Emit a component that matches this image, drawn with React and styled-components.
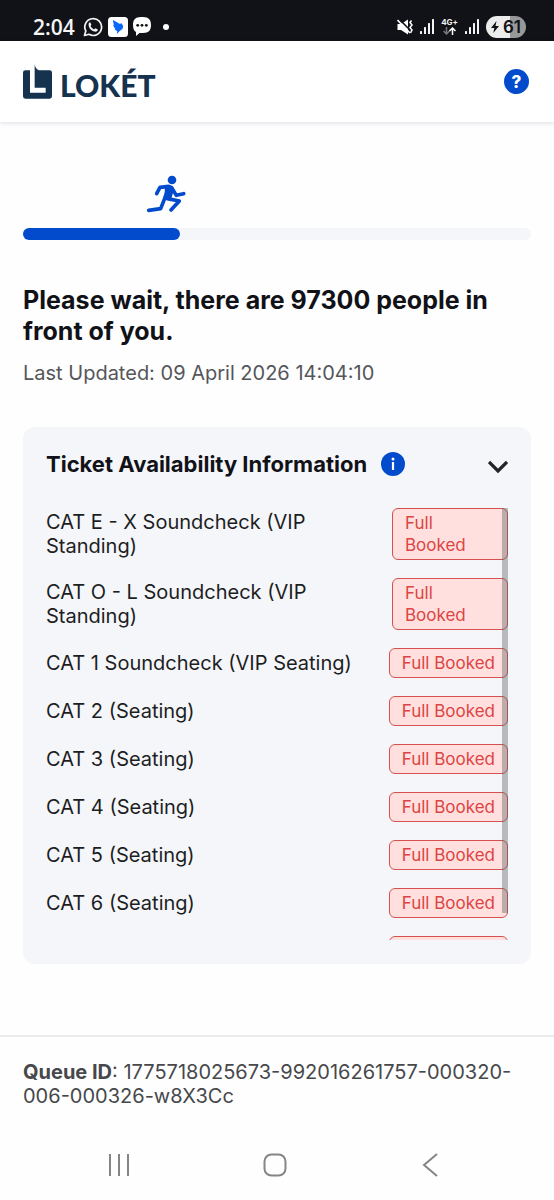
import React, { useState } from "react";
import styled, { createGlobalStyle } from "styled-components";

const tickets = [
  { name: "CAT E - X Soundcheck (VIP Standing)", narrow: true },
  { name: "CAT O - L Soundcheck (VIP Standing)", narrow: true },
  { name: "CAT 1 Soundcheck (VIP Seating)" },
  { name: "CAT 2 (Seating)" },
  { name: "CAT 3 (Seating)" },
  { name: "CAT 4 (Seating)" },
  { name: "CAT 5 (Seating)" },
  { name: "CAT 6 (Seating)" },
  { name: "CAT 7 (Seating)" },
];

const SignalIcon = () => (
  <svg width="14" height="16" viewBox="0 0 14 16" fill="#f4f4f5">
    <rect x="0" y="12" width="2" height="3" rx="0.5" />
    <rect x="4" y="8" width="2" height="7" rx="0.5" />
    <rect x="8" y="4" width="2" height="11" rx="0.5" />
    <rect x="12" y="0" width="2" height="15" rx="0.5" />
  </svg>
);

const WhatsappIcon = () => (
  <svg width="20" height="20" viewBox="0 0 20 20" fill="none">
    <path
      d="M1.5 18.5 2.8 14A8.4 8.4 0 1 1 6 17.3Z"
      stroke="#f4f4f5"
      strokeWidth="1.7"
      strokeLinejoin="round"
    />
    <path
      d="M7.2 5.3 8.4 7.8 7.5 9.1C8.4 10.8 9.5 11.8 11.1 12.5L12.4 11.3 14.8 12.5C14.6 14.2 13.3 14.8 11.8 14.6 8.4 14 5.8 11 5.6 8 5.5 6.5 6.1 5.4 7.2 5.3Z"
      fill="#f4f4f5"
    />
  </svg>
);

const BirdIcon = () => (
  <svg width="20" height="20" viewBox="0 0 20 20">
    <rect width="20" height="20" rx="3.5" fill="#fff" />
    <path
      d="M5 3 12 7 13.2 6 15.2 9C15 12 13.5 13 12 13.7L8.8 17 9.2 14C7.5 13.5 7 12.7 6.5 12L7.5 11.7C6 10.5 5.3 9 5.2 7.5L6.2 7.7C5.2 6.2 5 4.6 5 3Z"
      fill="#0969f8"
    />
  </svg>
);

const ChatIcon = () => (
  <svg width="18" height="19" viewBox="0 0 18 19">
    <path
      d="M8 0h2c6 0 8 3 8 8s-2 8-8 8H6.5L3 19v-4C1 14 0 11.5 0 8c0-5 2-8 8-8Z"
      fill="#fff"
    />
    <circle cx="4.7" cy="8.3" r="1.4" fill="#111217" />
    <circle cx="9" cy="8.3" r="1.4" fill="#111217" />
    <circle cx="13.3" cy="8.3" r="1.4" fill="#111217" />
  </svg>
);

const MuteIcon = () => (
  <svg width="16" height="16" viewBox="0 0 16 16">
    <path d="M0.5 5H4L11 0.5V15.5L4 11H0.5Z" fill="#fff" />
    <path d="M2 0 14 12" stroke="#111217" strokeWidth="1.6" />
    <path d="M0.5 1 13 14" stroke="#fff" strokeWidth="1.6" />
    <path
      d="M14.5 1.5 13 3.5 15 6 13 8.5 15 11 13.5 14"
      stroke="#fff"
      strokeWidth="1.5"
      fill="none"
    />
  </svg>
);

const DataArrows = () => (
  <svg width="13" height="8" viewBox="0 0 13 8" fill="none" strokeWidth="1.5">
    <path d="M3.5 0V7M0.5 4 3.5 7 6.5 4" stroke="#77777b" />
    <path d="M9.500 8V1M6.5 4 9.5 1 12.5 4" stroke="#fff" />
  </svg>
);

const BoltIcon = () => (
  <svg width="8" height="12" viewBox="0 0 8 12">
    <path d="M5.5 0 0 7H3.3L2.3 12 8 5H4.5Z" fill="#111217" />
  </svg>
);

const LoketMark = () => (
  <svg width="29" height="35" viewBox="0 0 87 105">
    <path
      d="M35 0C36 8 39 15 48 19H80Q87 19 87 26V97Q87 104 80 104H7Q0 104 0 97V26Q0 19 7 19H21V86H68V71H35Z"
      fill="#15324f"
    />
  </svg>
);

const Runner = () => (
  <svg width="40" height="38" viewBox="443 46 120 114">
    <circle cx="521" cy="61" r="13" fill="#034bcd" />
    <path d="M499 79 517 76 528 87 519 116 500 121Z" fill="#034bcd" />
    <g
      stroke="#034bcd"
      strokeWidth="11"
      strokeLinecap="round"
      strokeLinejoin="round"
      fill="none"
    >
      <path d="M475 102 485 83 511 80" />
      <path d="M520 84 534 107 556 102" />
      <path d="M507 93 498 119 487 147 451 152" />
      <path d="M507 117 543 124 518 151" />
    </g>
  </svg>
);

export default function App() {
  const [open, setOpen] = useState(true);

  return (
    <Page>
      <GlobalStyle />
      <StatusBar>
        <StatusGroup $gap={5}>
          <Clock>2:04</Clock>
          <WhatsappIcon />
          <BirdIcon />
          <ChatIcon />
          <Dot />
        </StatusGroup>
        <StatusGroup $gap={7}>
          <MuteIcon />
          <SignalIcon />
          <Network>
            4G+
            <DataArrows />
          </Network>
          <SignalIcon />
          <Battery>
            <BoltIcon />
            61
          </Battery>
        </StatusGroup>
      </StatusBar>

      <Header>
        <Brand href="#">
          <LoketMark />
          <BrandName>LOKÉT</BrandName>
        </Brand>
        <HelpButton type="button" aria-label="Help">
          ?
        </HelpButton>
      </Header>

      <Main>
        <RunnerTrack>
          <Runner />
        </RunnerTrack>
        <Progress>
          <ProgressFill />
        </Progress>
        <Title>Please wait, there are 97300 people in front of you.</Title>
        <Updated>Last Updated: 09 April 2026 14:04:10</Updated>

        <Card>
          <CardHeader>
            <CardTitle>Ticket Availability Information</CardTitle>
            <InfoButton type="button" aria-label="About availability">
              <svg width="24" height="24" viewBox="0 0 24 24">
                <circle cx="12" cy="12" r="12" fill="#034bcd" />
                <circle cx="12" cy="7" r="1.5" fill="#fff" />
                <path d="M12 10V18" stroke="#fff" strokeWidth="2.2" />
              </svg>
            </InfoButton>
            <ToggleButton
              type="button"
              aria-label="Toggle list"
              aria-expanded={open}
              onClick={() => setOpen(!open)}
            >
              <svg width="20" height="14" viewBox="0 0 20 14" fill="none">
                <path d="M1 2 10 11 19 2" stroke="#222327" strokeWidth="3.2" />
              </svg>
            </ToggleButton>
          </CardHeader>
          {open && (
            <ListBox>
              <TicketList>
                {tickets.map((ticket) => (
                  <TicketRow key={ticket.name}>
                    <TicketName>{ticket.name}</TicketName>
                    <Badge $narrow={ticket.narrow}>Full Booked</Badge>
                  </TicketRow>
                ))}
              </TicketList>
              <ScrollThumb />
            </ListBox>
          )}
        </Card>
      </Main>

      <Footer>
        <QueueId>
          <b>Queue ID</b>: 1775718025673-992016261757-000320-006-000326-w8X3Cc
        </QueueId>
      </Footer>

      <NavBar>
        <NavButton type="button" aria-label="Recent apps">
          <svg width="24" height="24" viewBox="0 0 24 24" fill="none">
            <path d="M3 1V23M12 1V23M21 1V23" stroke="#858585" strokeWidth="2" />
          </svg>
        </NavButton>
        <NavButton type="button" aria-label="Home">
          <svg width="24" height="24" viewBox="0 0 24 24" fill="none">
            <rect
              x="1.5"
              y="1.5"
              width="21"
              height="21"
              rx="7"
              stroke="#858585"
              strokeWidth="2"
            />
          </svg>
        </NavButton>
        <NavButton type="button" aria-label="Back">
          <svg width="24" height="24" viewBox="0 0 24 24" fill="none">
            <path d="M18 1 5 12 18 23" stroke="#858585" strokeWidth="2" />
          </svg>
        </NavButton>
      </NavBar>
    </Page>
  );
}

const GlobalStyle = createGlobalStyle`
  * {
    box-sizing: border-box;
  }
  body {
    margin: 0;
    background: #fefefe;
    font-family: "Inter", "Liberation Sans", sans-serif;
  }
  button {
    border: 0;
    padding: 0;
    background: none;
    font-family: inherit;
    cursor: pointer;
  }
  svg {
    display: block;
    flex-shrink: 0;
  }
`;

const Page = styled.div`
  min-height: 100vh;
  display: flex;
  flex-direction: column;
`;

const StatusBar = styled.div`
  display: flex;
  justify-content: space-between;
  height: 41px;
  padding: 12px 28px 0 33px;
  background: #111217;
  color: #f4f4f5;
`;
const StatusGroup = styled.div`
  display: flex;
  align-items: center;
  gap: ${({ $gap }) => $gap}px;
`;
const Clock = styled.span`
  margin-right: 3px;
  font-family: "Open Sans", sans-serif;
  font-size: 21px;
  font-weight: 600;
  line-height: 24px;
`;
const Dot = styled.span`
  width: 6px;
  height: 6px;
  margin-left: 7px;
  border-radius: 50%;
  background: #fff;
`;
const Network = styled.span`
  display: flex;
  flex-direction: column;
  align-items: center;
  font-size: 8px;
  font-weight: 700;
  line-height: 9px;
`;
const Battery = styled.span`
  display: flex;
  align-items: center;
  justify-content: center;
  gap: 4px;
  width: 40px;
  height: 22px;
  border-radius: 11px;
  background: linear-gradient(90deg, #ececec 61%, #98989a 61%);
  color: #111217;
  font-size: 17px;
  font-weight: 600;
`;

const Header = styled.header`
  display: flex;
  align-items: center;
  justify-content: space-between;
  height: 81px;
  padding: 0 25px 0 23px;
  background: #fff;
  box-shadow: 0 1px 5px rgba(20, 30, 60, 0.15);
`;
const Brand = styled.a`
  display: flex;
  align-items: flex-end;
  gap: 8px;
  color: #15324f;
  text-decoration: none;
`;
const BrandName = styled.span`
  font-family: "Lato", sans-serif;
  font-size: 30px;
  font-weight: 900;
  line-height: 28px;
`;
const HelpButton = styled.button`
  width: 25px;
  height: 25px;
  border-radius: 50%;
  background: #034bcd;
  color: #fff;
  font-size: 17px;
  font-weight: 800;
`;

const Main = styled.main`
  flex: 1;
  padding: 53px 23px 71px;
`;
const RunnerTrack = styled.div`
  display: flex;
  justify-content: flex-end;
  width: 32%;
  min-width: 40px;
`;
const Progress = styled.div`
  height: 12px;
  margin-top: 15px;
  border-radius: 6px;
  background: #f5f6fa;
`;
const ProgressFill = styled.div`
  width: 31%;
  height: 12px;
  border-radius: 6px;
  background: #034bcd;
`;
const Title = styled.h1`
  margin: 45px 0 0;
  color: #111217;
  font-size: 25px;
  font-weight: 700;
  line-height: 31px;
`;
const Updated = styled.p`
  margin: 14px 0 0;
  color: #55565a;
  font-size: 20px;
  line-height: 24px;
`;

const Card = styled.section`
  margin-top: 42px;
  padding: 24px 23px;
  border-radius: 12px;
  background: #f5f6fa;
`;
const CardHeader = styled.div`
  display: flex;
  align-items: center;
  height: 26px;
`;
const CardTitle = styled.h2`
  margin: 0;
  color: #111217;
  font-size: 22px;
  font-weight: 700;
  line-height: 26px;
`;
const InfoButton = styled.button`
  margin-left: 14px;
`;
const ToggleButton = styled.button`
  margin-top: 6px;
  margin-left: auto;
`;
const ListBox = styled.div`
  position: relative;
  margin-top: 31px;
`;
const TicketList = styled.ul`
  height: 432px;
  margin: 0;
  padding: 0;
  overflow-y: auto;
  list-style: none;
  scrollbar-width: none;
`;
const TicketRow = styled.li`
  display: flex;
  align-items: center;
  justify-content: space-between;
  gap: 30px;
  margin-bottom: 18px;
`;
const TicketName = styled.span`
  color: #1d1e22;
  font-size: 20px;
  line-height: 24px;
`;
const Badge = styled.span`
  flex-shrink: 0;
  width: ${({ $narrow }) => ($narrow ? "116px" : "auto")};
  padding: 3px 12px;
  border: 1px solid #d5504f;
  border-radius: 6px;
  background: #ffe0df;
  color: #dc4543;
  font-size: 17px;
  line-height: 22px;
`;
/* overlay scrollbar, it sits on top of the badges */
const ScrollThumb = styled.div`
  position: absolute;
  top: 0;
  right: 0;
  width: 6px;
  height: 405px;
  background: rgba(90, 94, 94, 0.4);
`;

const Footer = styled.footer`
  padding: 23px 23px 22px;
  border-top: 2px solid #ececec;
`;
const QueueId = styled.p`
  margin: 0;
  color: #47484b;
  font-size: 20px;
  line-height: 24px;
`;

const NavBar = styled.nav`
  display: flex;
  justify-content: space-around;
  padding: 23px 45px 23px 41px;
`;
const NavButton = styled.button`
  width: 24px;
  height: 24px;
`;
